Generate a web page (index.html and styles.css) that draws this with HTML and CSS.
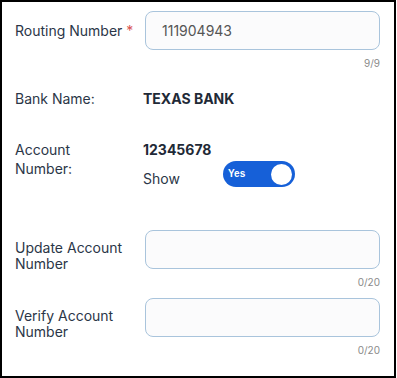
FILE: index.html
```html
<!DOCTYPE html>
<html lang="en">

<head>
    <meta charset="UTF-8">
    <meta name="viewport" content="width=device-width, initial-scale=1.0">
    <title>Bank Details</title>

    <link rel="stylesheet" href="styles.css">
</head>

<body>
    <section class="bank_panel">
        <div class="field_row routing_row">
            <label class="field_label" for="routing">Routing Number <span class="req">*</span></label>
            <div class="field_box">
                <input type="text" id="routing" class="text_input" value="111904943" maxlength="9">
                <div class="counter">9/9</div>
            </div>
        </div>

        <div class="field_row bank_row">
            <span class="field_label">Bank Name:</span>
            <span class="field_value">TEXAS BANK</span>
        </div>

        <div class="field_row account_row">
            <span class="field_label">Account<br>Number:</span>
            <div class="account_box">
                <span class="field_value">12345678</span>
                <div class="show_line">
                    <span class="show_text">Show</span>
                    <button type="button" class="toggle">
                        <span class="toggle_text">Yes</span>
                        <span class="knob"></span>
                    </button>
                </div>
            </div>
        </div>

        <div class="field_row update_row">
            <label class="field_label two_line" for="update">Update Account Number</label>
            <div class="field_box">
                <input type="text" id="update" class="text_input" maxlength="20">
                <div class="counter">0/20</div>
            </div>
        </div>

        <div class="field_row verify_row">
            <label class="field_label two_line" for="verify">Verify Account Number</label>
            <div class="field_box">
                <input type="text" id="verify" class="text_input" maxlength="20">
                <div class="counter">0/20</div>
            </div>
        </div>
    </section>
</body>

</html>
```

FILE: styles.css
```css
body {
    margin: 0;
    font-family: Inter, "Noto Sans", sans-serif;
    color: #2b3647;
}

.bank_panel {
    box-sizing: border-box;
    width: 396px;
    height: 378px;
    border: 2px solid #000;
    padding: 9px 15px 0 13px;
}

.field_row {
    display: flex;
}

.field_label {
    width: 130px;
    flex-shrink: 0;
    font-size: 14px;
    line-height: 19px;
}

.req {
    color: #d9534f;
}

.field_box {
    flex: 1;
}

.text_input {
    box-sizing: border-box;
    width: 235px;
    height: 39px;
    border: 1px solid #a9c4dc;
    border-radius: 8px;
    background: #fbfbfc;
    padding: 0 16px;
    font-family: inherit;
    font-size: 14px;
    color: #555;
    outline: none;
}

.counter {
    text-align: right;
    font-size: 10px;
    line-height: 12px;
    color: #8a8a8a;
    margin-top: 7px;
}

.routing_row .field_label {
    padding-top: 10px;
}

.bank_row {
    margin-top: 20px;
}

.field_value {
    font-size: 14px;
    font-weight: 700;
    line-height: 19px;
    color: #1f2a37;
    margin-left: -2px;
}

.account_row {
    margin-top: 32px;
}

.account_box {
    display: flex;
    flex-direction: column;
}

.show_line {
    display: flex;
    align-items: flex-start;
    margin-top: -7px;
    margin-left: -2px;
}

.show_text {
    width: 80px;
    font-size: 14px;
    line-height: 19px;
    padding-top: 17px;
}

.toggle {
    display: flex;
    align-items: center;
    justify-content: space-between;
    width: 72px;
    height: 26px;
    border: none;
    border-radius: 13px;
    background: #1660d8;
    padding: 0 3px 0 5px;
    cursor: pointer;
    margin-top: 9px;
}

.toggle_text {
    color: #fff;
    font-family: inherit;
    font-size: 10px;
    font-weight: 700;
    margin-top: -1px;
}

.knob {
    width: 21px;
    height: 21px;
    border-radius: 50%;
    background: #fff;
}

.update_row {
    margin-top: 42px;
}

.two_line {
    line-height: 16px;
    padding-top: 10px;
}

.verify_row {
    margin-top: 10px;
}
```
